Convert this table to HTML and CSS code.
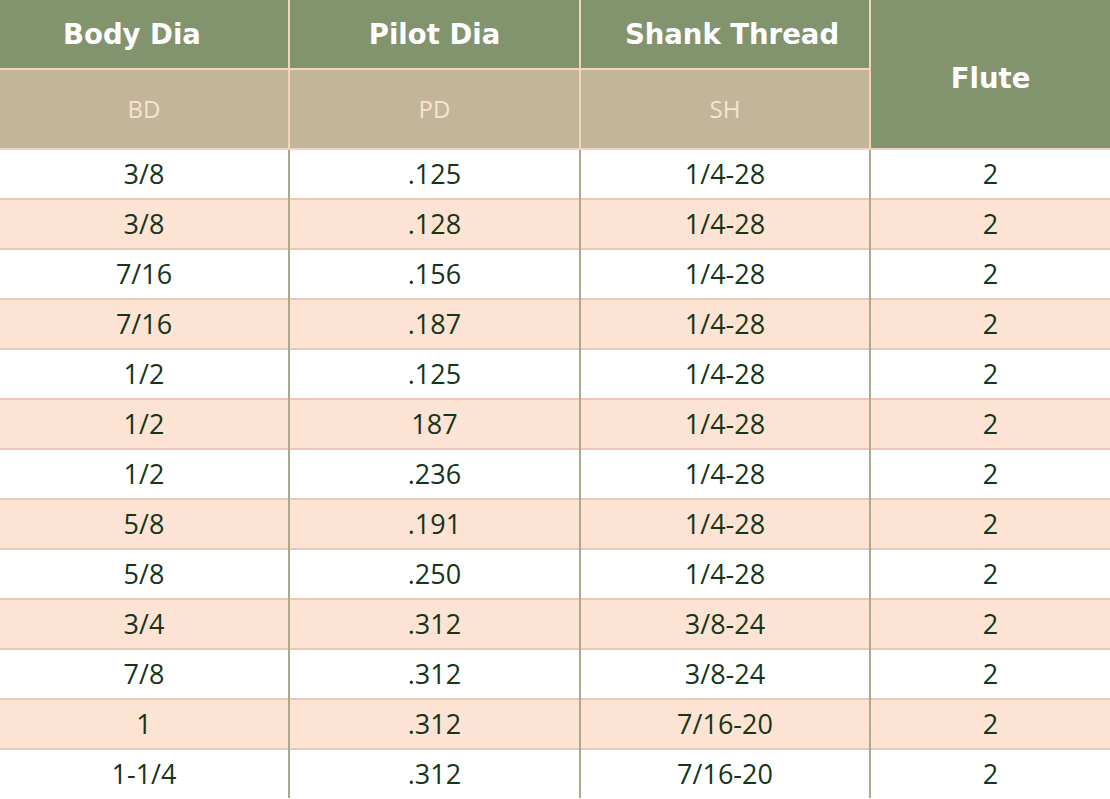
FILE: index.html
```html
<!DOCTYPE html>
<html>
<head>
<meta charset="utf-8">
<link rel="stylesheet" href="styles.css">
</head>
<body>
<table class="spec">
  <colgroup>
    <col class="c1"><col class="c2"><col class="c3"><col class="c4">
  </colgroup>
  <thead>
    <tr class="h1">
      <th class="t1">Body Dia</th>
      <th>Pilot Dia</th>
      <th class="t3">Shank Thread</th>
      <th rowspan="2" class="flute">Flute</th>
    </tr>
    <tr class="h2">
      <th>BD</th>
      <th>PD</th>
      <th>SH</th>
    </tr>
  </thead>
  <tbody>
    <tr><td>3/8</td><td>.125</td><td>1/4-28</td><td>2</td></tr>
    <tr><td>3/8</td><td>.128</td><td>1/4-28</td><td>2</td></tr>
    <tr><td>7/16</td><td>.156</td><td>1/4-28</td><td>2</td></tr>
    <tr><td>7/16</td><td>.187</td><td>1/4-28</td><td>2</td></tr>
    <tr><td>1/2</td><td>.125</td><td>1/4-28</td><td>2</td></tr>
    <tr><td>1/2</td><td>187</td><td>1/4-28</td><td>2</td></tr>
    <tr><td>1/2</td><td>.236</td><td>1/4-28</td><td>2</td></tr>
    <tr><td>5/8</td><td>.191</td><td>1/4-28</td><td>2</td></tr>
    <tr><td>5/8</td><td>.250</td><td>1/4-28</td><td>2</td></tr>
    <tr><td>3/4</td><td>.312</td><td>3/8-24</td><td>2</td></tr>
    <tr><td>7/8</td><td>.312</td><td>3/8-24</td><td>2</td></tr>
    <tr><td>1</td><td>.312</td><td>7/16-20</td><td>2</td></tr>
    <tr><td>1-1/4</td><td>.312</td><td>7/16-20</td><td>2</td></tr>
  </tbody>
</table>
</body>
</html>
```

FILE: styles.css
```css
html, body {
  margin: 0;
  padding: 0;
  background: #ffffff;
}
.spec {
  width: 1110px;
  border-collapse: collapse;
  table-layout: fixed;
}
.c1 { width: 289px; }
.c2 { width: 291px; }
.c3 { width: 290px; }
.c4 { width: 240px; }

.spec th {
  text-align: center;
  padding: 0;
  border: 2px solid #f4d3bf;
  border-top: none;
}
.spec th:first-child { border-left: none; }
.spec th.flute { border-right: none; }

.h1 th {
  height: 64px;
  background: #82946e;
  color: #ffffff;
  font-family: "DejaVu Sans", Verdana, sans-serif;
  font-weight: bold;
  font-size: 27.5px;
  padding-top: 2px;
  padding-bottom: 2px;
}
.h1 th.t1 { padding-right: 24px; }
.h1 th.t3 { padding-left: 14px; }
.h1 th.flute {
  padding-top: 8px;
  padding-bottom: 0;
  padding-left: 0;
}
.h2 th {
  height: 76px;
  background: #c2b59a;
  color: #fbe2d2;
  font-family: "Open Sans", "Noto Sans", sans-serif;
  font-weight: normal;
  font-size: 24px;
  padding-bottom: 2px;
}

.spec td {
  height: 46px;
  padding: 0 0 2px 0;
  text-align: center;
  font-family: "Open Sans", "Noto Sans", sans-serif;
  font-size: 27px;
  color: #163518;
  border-top: 2px solid #ecc7b1;
  border-left: 2px solid #a9aa8c;
  border-right: 2px solid #a9aa8c;
}
.spec td:first-child { border-left: none; }
.spec td:last-child { border-right: none; }
.spec tbody tr:first-child td { border-top: none; }
.spec tbody tr:nth-child(even) td { background: #fde3d3; }
```
